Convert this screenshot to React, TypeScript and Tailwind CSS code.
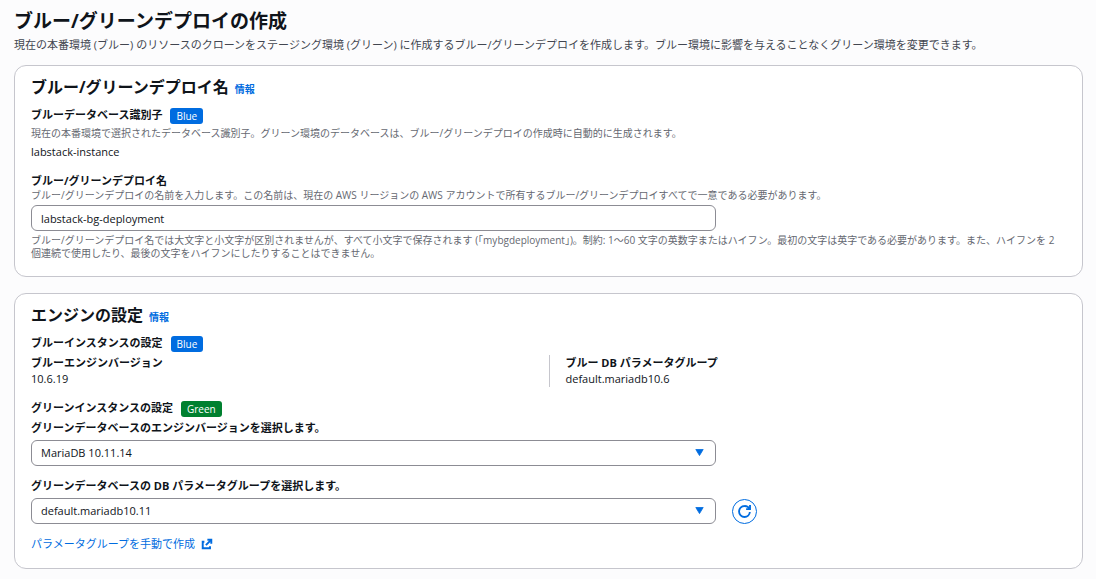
import { useState, type ReactNode } from "react";

function InfoLink({ topic }: { topic: string }) {
  return (
    <a href="#info" aria-label={`${topic} 情報`} className="text-[10px] leading-4 font-bold text-[#006ce0] hover:underline">
      情報
    </a>
  );
}

function Badge({ className, children }: { className: string; children: ReactNode }) {
  return (
    <span className={`flex h-4 items-center rounded-[3px] px-1.5 text-[10px] font-medium text-white ${className}`}>
      {children}
    </span>
  );
}

function Card({ title, children }: { title: string; children: ReactNode }) {
  return (
    <section className="rounded-xl border border-[#c6c6cd] bg-white px-4 pt-[11px] pb-4">
      <div className="mb-[9px] flex items-baseline gap-1.5">
        <h2 className="text-base leading-5 font-bold">{title}</h2>
        <InfoLink topic={title} />
      </div>
      {children}
    </section>
  );
}

function BadgeRow({ label, badge }: { label: string; badge: ReactNode }) {
  return (
    <div className="flex h-5 items-center gap-2">
      <h3 className="pb-0.5 font-bold">{label}</h3>
      {badge}
    </div>
  );
}

function Select({ id, options }: { id: string; options: string[] }) {
  const [value, setValue] = useState(options[0]);
  return (
    <div className="relative">
      <select
        id={id}
        value={value}
        onChange={(e) => setValue(e.target.value)}
        className="block h-[26px] w-full appearance-none rounded-md border border-[#8c8c94] bg-white pr-8 pl-[9px]"
      >
        {options.map((o) => (
          <option key={o}>{o}</option>
        ))}
      </select>
      <svg
        viewBox="0 0 9 8"
        className="pointer-events-none absolute top-[9px] right-3 h-2 w-[9px] fill-[#006ce0]"
        aria-hidden="true"
      >
        <path d="M0.8 0.5h7.4L4.5 6.6z" stroke="#006ce0" strokeLinejoin="round" strokeWidth="0.8" />
      </svg>
    </div>
  );
}

export default function App() {
  const [name, setName] = useState("labstack-bg-deployment");
  const hint = "text-[10px] leading-[13px] text-[#656871]";
  const formRow = "grid grid-cols-3 gap-x-4";

  return (
    <main
      lang="ja"
      className="min-h-screen bg-[#fcfcfd] pt-[9px] pr-[13px] pb-2.5 pl-3.5 font-['Open_Sans','Noto_Sans_CJK_JP',sans-serif] text-[11px] leading-4 text-[#0f141a]"
    >
      <h1 className="text-[19px] leading-6 font-bold">ブルー/グリーンデプロイの作成</h1>
      <p className="mt-1 text-[#424650]">
        現在の本番環境 (ブルー) のリソースのクローンをステージング環境 (グリーン) に作成するブルー/グリーンデプロイを作成します。ブルー環境に影響を与えることなくグリーン環境を変更できます。
      </p>

      <div className="mt-3 flex flex-col gap-4">
        <Card title="ブルー/グリーンデプロイ名">
          <BadgeRow label="ブルーデータベース識別子" badge={<Badge className="bg-[#006ce0]">Blue</Badge>} />
          <p className={`mt-px ${hint}`}>
            現在の本番環境で選択されたデータベース識別子。グリーン環境のデータベースは、ブルー/グリーンデプロイの作成時に自動的に生成されます。
          </p>
          <p className="mt-1">labstack-instance</p>

          <label htmlFor="deployment-name" className="mt-[13px] block font-bold">
            ブルー/グリーンデプロイ名
          </label>
          <p className={hint}>
            ブルー/グリーンデプロイの名前を入力します。この名前は、現在の AWS リージョンの AWS アカウントで所有するブルー/グリーンデプロイすべてで一意である必要があります。
          </p>
          <div className={`mt-[3px] ${formRow}`}>
            <input
              id="deployment-name"
              type="text"
              value={name}
              onChange={(e) => setName(e.target.value)}
              aria-describedby="deployment-name-hint"
              className="col-span-2 h-[26px] min-w-0 rounded-md border border-[#8c8c94] bg-white px-[9px]"
            />
          </div>
          <p id="deployment-name-hint" className={`mt-[3px] ${hint}`}>
            ブルー/グリーンデプロイ名では大文字と小文字が区別されませんが、すべて小文字で保存されます (｢mybgdeployment｣)。制約: 1～60 文字の英数字またはハイフン。最初の文字は英字である必要があります。また、ハイフンを 2 個連続で使用したり、最後の文字をハイフンにしたりすることはできません。
          </p>
        </Card>

        <Card title="エンジンの設定">
          <BadgeRow label="ブルーインスタンスの設定" badge={<Badge className="bg-[#006ce0]">Blue</Badge>} />
          <dl className="mt-px grid grid-cols-2">
            <div>
              <dt className="font-bold">ブルーエンジンバージョン</dt>
              <dd>10.6.19</dd>
            </div>
            <div className="border-l border-[#c6c6cd] pl-4">
              <dt className="font-bold">ブルー DB パラメータグループ</dt>
              <dd>default.mariadb10.6</dd>
            </div>
          </dl>

          <div className="mt-3">
            <BadgeRow label="グリーンインスタンスの設定" badge={<Badge className="bg-[#00802f]">Green</Badge>} />
          </div>
          <label htmlFor="engine-version" className="mt-px block font-bold">
            グリーンデータベースのエンジンバージョンを選択します。
          </label>
          <div className={`mt-1 ${formRow}`}>
            <div className="col-span-2">
              <Select id="engine-version" options={["MariaDB 10.11.14"]} />
            </div>
          </div>

          <label htmlFor="parameter-group" className="mt-3 block font-bold">
            グリーンデータベースの DB パラメータグループを選択します。
          </label>
          <div className={`mt-1 items-center ${formRow}`}>
            <div className="col-span-2">
              <Select id="parameter-group" options={["default.mariadb10.11"]} />
            </div>
            <button
              type="button"
              aria-label="更新"
              className="flex size-[25px] items-center justify-center rounded-full border border-[#006ce0] bg-white text-[#006ce0] hover:bg-[#f0fbff]"
            >
              <svg viewBox="0 0 16 16" className="size-[13px]" fill="none" stroke="currentColor" strokeWidth="2.3" aria-hidden="true">
                <path d="M10 5h4.8V0" />
                <path d="M14.6 8.6A6.7 6.7 0 0 1 8 14.7 6.7 6.7 0 0 1 1.3 8 6.7 6.7 0 0 1 8 1.3 6.7 6.7 0 0 1 14.2 5" />
              </svg>
            </button>
          </div>

          <a href="#parameter-groups" className="mt-3 flex w-fit items-center gap-1.5 text-[#006ce0] hover:underline">
            パラメータグループを手動で作成
            <svg viewBox="0 0 16 16" className="size-3" fill="none" stroke="currentColor" strokeWidth="2.6" aria-hidden="true">
              <path d="M8.5 2.3h5.2v5.2" />
              <path d="m6.5 9.5 7-7" />
              <path d="M4.5 5H2.3v8.7H12V11" />
            </svg>
          </a>
        </Card>
      </div>
    </main>
  );
}
